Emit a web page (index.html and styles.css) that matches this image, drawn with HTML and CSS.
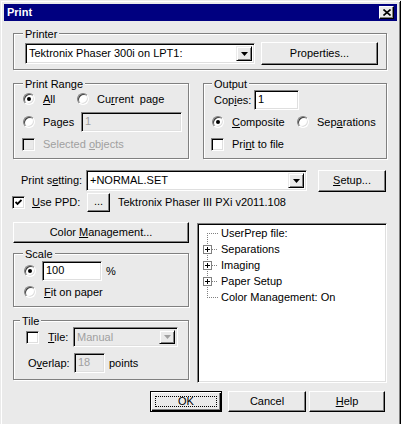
FILE: index.html
```html
<!DOCTYPE html>
<html lang="en">
<head>
  <meta charset="UTF-8" />
  <title>Print</title>
  <link rel="stylesheet" href="styles.css">
</head>
<body>
  <div class="window">
    <div class="titlebar">
      <span class="title">Print</span>
      <span class="close-btn">
        <svg width="8" height="7" viewBox="0 0 8 7"><path d="M0.5 0.5 L7.5 6.5 M7.5 0.5 L0.5 6.5" stroke="#000" stroke-width="1.6"/></svg>
      </span>
    </div>

    <div class="body">
      <div class="group printer-group">
        <span class="legend">Printer</span>
        <div class="printer-row">
          <div class="combo printer-combo">
            <span class="combo-text">Tektronix Phaser 300i on LPT1:</span>
            <span class="drop"><svg width="7" height="4" viewBox="0 0 7 4"><polygon points="0,0 7,0 3.5,4" fill="#000"/></svg></span>
          </div>
          <button class="btn properties-btn"><span>Properties...</span></button>
        </div>
      </div>

      <div class="groups-row">
        <div class="group range-group">
          <span class="legend">Print Range</span>
          <div class="range-row1">
            <label class="opt opt-all"><span class="radio checked"></span><span><u>A</u>ll</span></label>
            <label class="opt"><span class="radio"></span><span>Cu<u>r</u>rent&nbsp; page</span></label>
          </div>
          <div class="range-row2">
            <label class="opt opt-pages"><span class="radio"></span><span>Pages</span></label>
            <div class="field disabled pages-field">1</div>
          </div>
          <div class="range-row3">
            <label class="opt disabled-text"><span class="check off"></span><span>Selected <u>o</u>bjects</span></label>
          </div>
        </div>

        <div class="group output-group">
          <span class="legend">Output</span>
          <div class="out-row1">
            <span class="copies-label">Cop<u>i</u>es:</span>
            <div class="field copies-field">1</div>
          </div>
          <div class="out-row2">
            <label class="opt opt-composite"><span class="radio checked"></span><span><u>C</u>omposite</span></label>
            <label class="opt"><span class="radio"></span><span>Sep<u>a</u>rations</span></label>
          </div>
          <div class="out-row3">
            <label class="opt"><span class="check"></span><span>Pri<u>n</u>t to file</span></label>
          </div>
        </div>
      </div>

      <div class="setting-row">
        <span class="setting-label">Print s<u>e</u>tting:</span>
        <div class="combo setting-combo">
          <span class="combo-text">+NORMAL.SET</span>
          <span class="drop"><svg width="7" height="4" viewBox="0 0 7 4"><polygon points="0,0 7,0 3.5,4" fill="#000"/></svg></span>
        </div>
        <button class="btn setup-btn"><span><u>S</u>etup...</span></button>
      </div>

      <div class="ppd-row">
        <span class="check on">
          <svg width="7" height="7" viewBox="0 0 7 7"><polyline points="0.5,3 2.5,5 6.5,1" fill="none" stroke="#000" stroke-width="1.8"/></svg>
        </span>
        <span class="ppd-label"><u>U</u>se PPD:</span>
        <button class="btn dots-btn"><span>...</span></button>
        <span class="ppd-name">Tektronix Phaser III PXi v2011.108</span>
      </div>

      <div class="lower">
        <div class="left-col">
          <button class="btn color-btn"><span>Color <u>M</u>anagement...</span></button>

          <div class="group scale-group">
            <span class="legend">Scale</span>
            <div class="scale-row1">
              <span class="radio checked"></span>
              <div class="field scale-field">100</div>
              <span class="pct">%</span>
            </div>
            <div class="scale-row2">
              <label class="opt"><span class="radio"></span><span><u>F</u>it on paper</span></label>
            </div>
          </div>

          <div class="group tile-group">
            <span class="legend tile-legend">Tile</span>
            <div class="tile-row1">
              <span class="check"></span>
              <span class="tile-label"><u>T</u>ile:</span>
              <div class="combo disabled tile-combo">
                <span class="combo-text">Manual</span>
                <span class="drop"><svg width="7" height="4" viewBox="0 0 7 4"><polygon points="0,0 7,0 3.5,4" fill="#a0a0a0"/></svg></span>
              </div>
            </div>
            <div class="tile-row2">
              <span class="overlap-label">O<u>v</u>erlap:</span>
              <div class="field disabled overlap-field">18</div>
              <span class="points">points</span>
            </div>
          </div>
        </div>

        <div class="tree">
          <div class="tree-item">
            <svg width="20" height="16" viewBox="0 0 20 16"><path d="M8.5 8 V16 M8 8.5 H19" class="twig"/></svg>
            <span>UserPrep file:</span>
          </div>
          <div class="tree-item">
            <svg width="20" height="16" viewBox="0 0 20 16"><path d="M8.5 0 V16 M13 8.5 H19" class="twig"/><rect x="4.5" y="4.5" width="8" height="8" class="box"/><path d="M6 8.5 H11 M8.5 6 V11" class="plus"/></svg>
            <span>Separations</span>
          </div>
          <div class="tree-item">
            <svg width="20" height="16" viewBox="0 0 20 16"><path d="M8.5 0 V16 M13 8.5 H19" class="twig"/><rect x="4.5" y="4.5" width="8" height="8" class="box"/><path d="M6 8.5 H11 M8.5 6 V11" class="plus"/></svg>
            <span>Imaging</span>
          </div>
          <div class="tree-item">
            <svg width="20" height="16" viewBox="0 0 20 16"><path d="M8.5 0 V16 M13 8.5 H19" class="twig"/><rect x="4.5" y="4.5" width="8" height="8" class="box"/><path d="M6 8.5 H11 M8.5 6 V11" class="plus"/></svg>
            <span>Paper Setup</span>
          </div>
          <div class="tree-item">
            <svg width="20" height="16" viewBox="0 0 20 16"><path d="M8.5 0 V8 M8 8.5 H19" class="twig"/></svg>
            <span>Color Management: On</span>
          </div>
        </div>
      </div>

      <div class="button-row">
        <button class="btn default ok-btn"><span class="focus">OK</span></button>
        <button class="btn cancel-btn"><span>Cancel</span></button>
        <button class="btn help-btn"><span><u>H</u>elp</span></button>
      </div>
    </div>
  </div>
</body>
</html>
```

FILE: styles.css
```css
* {
  box-sizing: border-box;
}

body {
  margin: 0;
  background: #eaeaea;
  color: #000;
  font-family: "Liberation Sans", Arial, sans-serif;
  font-size: 11px;
  line-height: 13px;
  overflow: hidden;
}

u {
  text-decoration-thickness: 1px;
  text-underline-offset: 1px;
}

.window {
  width: 401px;
  height: 432px;
  padding: 4px;
  background: #eaeaea;
  box-shadow: inset 1px 1px #eaeaea, inset -1px -1px #000, inset 2px 2px #fff, inset -2px -2px #808080;
}

/* title bar */
.titlebar {
  height: 17px;
  background: #000080;
  color: #fff;
  font-weight: bold;
  display: flex;
  align-items: center;
  justify-content: space-between;
  padding: 0 3px 0 3px;
}

.close-btn {
  width: 15px;
  height: 13px;
  background: #eaeaea;
  display: flex;
  align-items: center;
  justify-content: center;
  border: 1px solid;
  border-color: #fff #000 #000 #fff;
  box-shadow: inset -1px -1px #808080;
}

.close-btn svg {
  display: block;
}

.body {
  padding-left: 9px;
}

/* etched group boxes */
.group {
  border: 1px solid #808080;
  box-shadow: 1px 1px #fff, inset 1px 1px #fff;
}

.legend {
  display: block;
  width: fit-content;
  height: 13px;
  margin: -6px 0 -7px 9px;
  padding: 0 2px;
  background: #eaeaea;
}

/* controls */
.btn {
  font: inherit;
  color: #000;
  background: #eaeaea;
  border: 1px solid;
  border-color: #fff #000 #000 #fff;
  box-shadow: inset -1px -1px #808080;
  padding: 0;
  margin: 0;
  display: flex;
  align-items: center;
  justify-content: center;
  white-space: nowrap;
}

.btn.default {
  border: 1px solid #000;
  box-shadow: inset 1px 1px #fff, inset -1px -1px #000, inset -2px -2px #808080;
}

.focus {
  display: flex;
  align-items: center;
  justify-content: center;
  width: calc(100% - 8px);
  height: calc(100% - 8px);
  border: 1px dotted #000;
}

.field,
.combo {
  height: 20px;
  background: #fff;
  border: 1px solid;
  border-color: #808080 #fff #fff #808080;
  box-shadow: inset 1px 1px #000, inset -1px -1px #dfdfdf;
}

.field {
  padding: 2px 0 0 3px;
}

.field.disabled,
.combo.disabled {
  background: #eaeaea;
  color: #a0a0a0;
}

.combo {
  display: flex;
  padding: 2px;
}

.combo-text {
  flex: 1;
  padding: 1px 0 0 1px;
  white-space: nowrap;
}

.drop {
  width: 16px;
  background: #eaeaea;
  border: 1px solid;
  border-color: #eaeaea #000 #000 #eaeaea;
  box-shadow: inset 1px 1px #fff, inset -1px -1px #808080;
  display: flex;
  align-items: center;
  justify-content: center;
}

.drop svg {
  display: block;
}

.opt {
  display: flex;
  align-items: center;
  gap: 8px;
  white-space: nowrap;
}

.radio {
  flex: none;
  position: relative;
  width: 12px;
  height: 12px;
  border-radius: 50%;
  background: #fff;
  border: 1px solid;
  border-color: #808080 #fff #fff #808080;
  box-shadow: inset 1px 1px #404040, inset -1px -1px #dfdfdf;
}

.radio.checked::after {
  content: "";
  position: absolute;
  left: 3px;
  top: 3px;
  width: 4px;
  height: 4px;
  border-radius: 50%;
  background: #000;
}

.check {
  flex: none;
  width: 13px;
  height: 13px;
  background: #fff;
  border: 1px solid;
  border-color: #808080 #fff #fff #808080;
  box-shadow: inset 1px 1px #000, inset -1px -1px #dfdfdf;
  display: flex;
  align-items: center;
  justify-content: center;
}

.check.off {
  background: #eaeaea;
}

.check svg {
  display: block;
}

.disabled-text {
  color: #a0a0a0;
}

/* printer */
.printer-group {
  margin-top: 12px;
  width: 374px;
  padding-bottom: 4px;
}

.printer-row {
  display: flex;
  align-items: center;
  height: 23px;
  margin: 8px 0 0 11px;
}

.printer-combo {
  width: 230px;
  height: 21px;
}

.properties-btn {
  width: 117px;
  height: 23px;
  margin-left: 6px;
}

/* print range + output */
.groups-row {
  display: flex;
  margin-top: 13px;
}

.range-group {
  width: 176px;
  padding-bottom: 7px;
}

.range-row1 {
  display: flex;
  align-items: center;
  height: 16px;
  margin: 7px 0 0 9px;
}

.opt-all {
  width: 54px;
}

.range-row2 {
  display: flex;
  align-items: center;
  height: 20px;
  margin: 5px 0 0 9px;
}

.opt-pages {
  width: 58px;
}

.pages-field {
  width: 101px;
}

.range-row3 {
  display: flex;
  align-items: center;
  height: 13px;
  margin: 6px 0 0 8px;
}

.output-group {
  width: 184px;
  margin-left: 14px;
  padding-bottom: 7px;
}

.output-group .legend {
  margin-left: 8px;
}

.out-row1 {
  display: flex;
  align-items: center;
  height: 20px;
  margin: 6px 0 0 10px;
}

.copies-label {
  width: 40px;
}

.copies-field {
  width: 45px;
}

.out-row2 {
  display: flex;
  align-items: center;
  height: 16px;
  margin: 4px 0 0 8px;
}

.opt-composite {
  width: 85px;
}

.out-row3 {
  display: flex;
  align-items: center;
  height: 13px;
  margin: 8px 0 0 7px;
}

/* print setting */
.setting-row {
  display: flex;
  align-items: center;
  height: 23px;
  margin: 10px 0 0 8px;
}

.setting-label {
  width: 65px;
}

.setting-combo {
  width: 221px;
  height: 21px;
}

.setup-btn {
  width: 68px;
  height: 22px;
  margin-left: 11px;
}

.ppd-row {
  display: flex;
  align-items: center;
  height: 19px;
  margin: 1px 0 0 -1px;
}

.ppd-label {
  width: 55px;
  margin-left: 7px;
}

.dots-btn {
  width: 23px;
  height: 19px;
  padding-bottom: 3px;
}

.ppd-name {
  margin-left: 8px;
}

/* lower area */
.lower {
  display: flex;
  align-items: flex-start;
  margin-top: 10px;
}

.left-col {
  width: 176px;
}

.color-btn {
  width: 176px;
  height: 21px;
}

.scale-group {
  margin-top: 10px;
  padding-bottom: 6px;
}

.scale-row1 {
  display: flex;
  align-items: center;
  height: 20px;
  margin: 7px 0 0 10px;
}

.scale-field {
  width: 60px;
  margin-left: 6px;
}

.pct {
  margin-left: 4px;
}

.scale-row2 {
  display: flex;
  align-items: center;
  height: 16px;
  margin: 3px 0 0 10px;
}

.tile-group {
  margin-top: 13px;
  padding-bottom: 6px;
}

.tile-legend {
  margin-left: 6px;
}

.tile-row1 {
  display: flex;
  align-items: center;
  height: 20px;
  margin: 6px 0 0 12px;
}

.tile-label {
  width: 25px;
  margin-left: 9px;
}

.tile-combo {
  width: 105px;
}

.tile-row2 {
  display: flex;
  align-items: center;
  height: 20px;
  margin: 6px 0 0 14px;
}

.overlap-label {
  width: 46px;
}

.overlap-field {
  width: 31px;
}

.points {
  margin-left: 4px;
}

/* tree view */
.tree {
  width: 190px;
  height: 160px;
  margin: 1px 0 0 8px;
  padding: 1px 0 0 1px;
  background: #fff;
  border: 1px solid;
  border-color: #808080 #fff #fff #808080;
  box-shadow: inset 1px 1px #000, inset -1px -1px #dfdfdf;
}

.tree-item {
  display: flex;
  align-items: center;
  height: 16px;
  gap: 2px;
  white-space: nowrap;
}

.tree-item svg {
  display: block;
  flex: none;
  shape-rendering: crispEdges;
}

.twig {
  fill: none;
  stroke: #808080;
  stroke-width: 1;
  stroke-dasharray: 1 1;
}

.box {
  fill: #fff;
  stroke: #808080;
}

.plus {
  fill: none;
  stroke: #000;
}

/* bottom buttons */
.button-row {
  display: flex;
  justify-content: flex-end;
  margin-top: 8px;
  padding-right: 12px;
}

.button-row .btn {
  height: 21px;
}

.ok-btn {
  width: 72px;
  margin-right: 6px;
}

.cancel-btn {
  width: 78px;
  margin-right: 3px;
}

.help-btn {
  width: 76px;
}
```
